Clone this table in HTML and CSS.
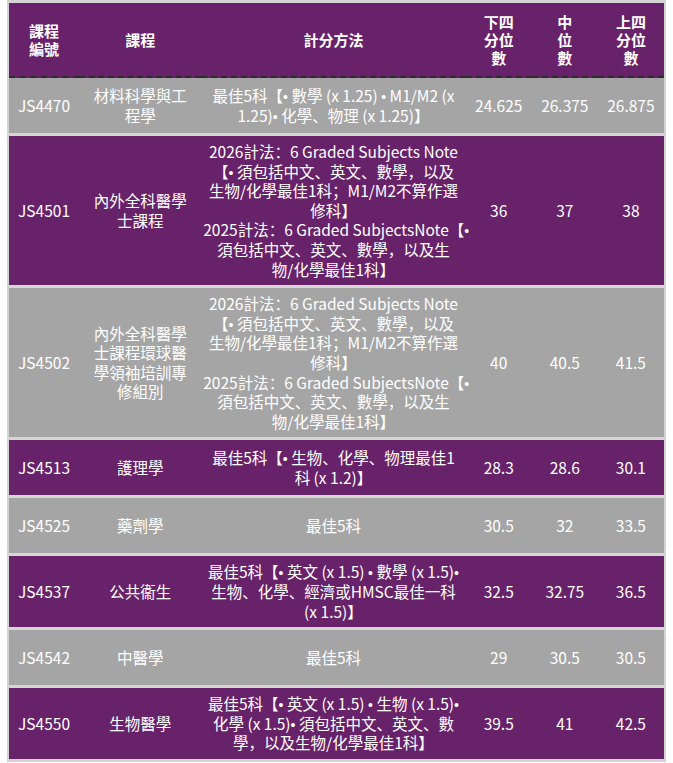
FILE: index.html
```html
<!DOCTYPE html>
<html lang="zh-Hans">
<head>
<meta charset="utf-8">
<title>課程分數</title>
<link rel="stylesheet" href="styles.css">
</head>
<body>
<table class="scores">
  <colgroup>
    <col class="c-code">
    <col class="c-name">
    <col class="c-method">
    <col class="c-q">
    <col class="c-q">
    <col class="c-q">
  </colgroup>
  <thead>
    <tr>
      <th>課程<br>編號</th>
      <th>課程</th>
      <th>計分方法</th>
      <th>下四<br>分位<br>數</th>
      <th>中<br>位<br>數</th>
      <th>上四<br>分位<br>數</th>
    </tr>
  </thead>
  <tbody>
    <tr class="gray">
      <td>JS4470</td>
      <td>材料科學與工程學</td>
      <td class="method">最佳5科【<span class="b">•</span> 數學 (x 1.25) <span class="b">•</span> M1/M2 (x<br>1.25)<span class="b">•</span> 化學、物理 (x 1.25)】</td>
      <td>24.625</td>
      <td>26.375</td>
      <td>26.875</td>
    </tr>
    <tr class="purple">
      <td>JS4501</td>
      <td>內外全科醫學士課程</td>
      <td class="method">2026計法：6 Graded Subjects Note<br>【<span class="b">•</span> 須包括中文、英文、數學，以及<br>生物/化學最佳1科；M1/M2不算作選<br>修科】<br>2025計法：6 Graded SubjectsNote【<span class="b">•</span><br>須包括中文、英文、數學，以及生<br>物/化學最佳1科】</td>
      <td>36</td>
      <td>37</td>
      <td>38</td>
    </tr>
    <tr class="gray">
      <td>JS4502</td>
      <td>內外全科醫學士課程環球醫學領袖培訓專修組別</td>
      <td class="method">2026計法：6 Graded Subjects Note<br>【<span class="b">•</span> 須包括中文、英文、數學，以及<br>生物/化學最佳1科；M1/M2不算作選<br>修科】<br>2025計法：6 Graded SubjectsNote【<span class="b">•</span><br>須包括中文、英文、數學，以及生<br>物/化學最佳1科】</td>
      <td>40</td>
      <td>40.5</td>
      <td>41.5</td>
    </tr>
    <tr class="purple">
      <td>JS4513</td>
      <td>護理學</td>
      <td class="method">最佳5科【<span class="b">•</span> 生物、化學、物理最佳1<br>科 (x 1.2)】</td>
      <td>28.3</td>
      <td>28.6</td>
      <td>30.1</td>
    </tr>
    <tr class="gray">
      <td>JS4525</td>
      <td>藥劑學</td>
      <td class="method">最佳5科</td>
      <td>30.5</td>
      <td>32</td>
      <td>33.5</td>
    </tr>
    <tr class="purple">
      <td>JS4537</td>
      <td>公共衞生</td>
      <td class="method">最佳5科【<span class="b">•</span> 英文 (x 1.5) <span class="b">•</span> 數學 (x 1.5)<span class="b">•</span><br>生物、化學、經濟或HMSC最佳一科<br>(x 1.5)】</td>
      <td>32.5</td>
      <td>32.75</td>
      <td>36.5</td>
    </tr>
    <tr class="gray">
      <td>JS4542</td>
      <td>中醫學</td>
      <td class="method">最佳5科</td>
      <td>29</td>
      <td>30.5</td>
      <td>30.5</td>
    </tr>
    <tr class="purple">
      <td>JS4550</td>
      <td>生物醫學</td>
      <td class="method">最佳5科【<span class="b">•</span> 英文 (x 1.5) <span class="b">•</span> 生物 (x 1.5)<span class="b">•</span><br>化學 (x 1.5)<span class="b">•</span> 須包括中文、英文、數<br>學，以及生物/化學最佳1科】</td>
      <td>39.5</td>
      <td>41</td>
      <td>42.5</td>
    </tr>
  </tbody>
</table>
</body>
</html>
```

FILE: styles.css
```css
html, body {
  margin: 0;
  padding: 0;
  background: #ffffff;
}

body {
  padding: 0 7px 4px 7px;
  font-family: "Noto Sans CJK SC", "Noto Sans", sans-serif;
  color: #ffffff;
}

.scores {
  width: 659px;
  table-layout: fixed;
  border-collapse: separate;
  border-spacing: 0;
  border-style: solid;
  border-color: #d3d3d3;
  border-width: 3px 2px 3px 2px;
}

.c-code { width: 70px; }
.c-name { width: 122px; }
.c-method { width: 264px; }
.c-q { width: 66px; }

.scores th {
  background: #68226a;
  font-size: 15px;
  font-weight: 700;
  line-height: 18px;
  padding: 10px 6px 9px;
  text-align: center;
  vertical-align: middle;
  border-bottom: 2px dashed #2b2b2b;
}

.scores td {
  font-size: 15.5px;
  line-height: 19.6px;
  padding: 6px 6px;
  height: 43px;
  text-align: center;
  vertical-align: middle;
  border-top: 3px solid #d6d6d6;
}

.scores td:nth-child(2) {
  padding-left: 8px;
  padding-right: 8px;
}

.scores td.method {
  padding-left: 2px;
  padding-right: 2px;
  white-space: nowrap;
}

.scores .b {
  font-family: "Liberation Sans", "Noto Sans", sans-serif;
  font-size: 14px;
  line-height: 0;
}

.scores tbody tr:first-child td {
  border-top: 0;
}

.scores tr.gray td {
  background: #a5a5a5;
}

.scores tr.purple td {
  background: #68226a;
}
```
